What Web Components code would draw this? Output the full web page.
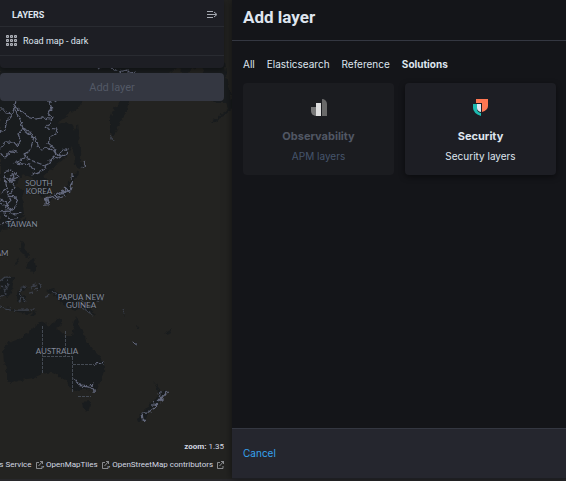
<!DOCTYPE html>
<html lang="en">
<head>
<meta charset="utf-8">
<title>Maps - Add layer</title>
<style>
html, body { height: 100%; margin: 0; }
body { background: #141519; color: #dfe5ef; font-family: Inter, "Liberation Sans", sans-serif; font-size: 10px; }
</style>
</head>
<body>
<maps-app></maps-app>
<script>
const define = (name, html, setup) => customElements.define(name, class extends HTMLElement {
  constructor() {
    super();
    this.attachShadow({ mode: 'open' }).innerHTML = '<style>*{box-sizing:border-box}button{font:inherit;border:0;background:none;padding:0;margin:0;color:inherit;cursor:pointer}</style>' + html;
  }
  connectedCallback() { if (setup) setup.call(this); }
});

define('world-map', `
<style>
:host { display: block; overflow: hidden; background: #232321; }
svg { display: block; width: 100%; height: 100%; }
.land { fill: #191c1e; }
.sea { fill: #232321; }
.line { fill: none; stroke: #63687c; stroke-width: 1.2; stroke-linejoin: bevel; }
.faint { stroke: #3c414c; }
.dash { fill: none; stroke-dasharray: 3 1; stroke: #444a53; }
text { fill: #858b9a; stroke: #191c1e; stroke-width: 1px; paint-order: stroke; font: 8px Lato, sans-serif; text-anchor: middle; }
</style>
<svg viewBox="0 0 232 481" preserveAspectRatio="xMinYMin slice" role="img" aria-label="Map of Asia and Oceania">
<filter id="rough" x="0" y="0" width="100%" height="100%" color-interpolation-filters="sRGB"><feTurbulence type="fractalNoise" baseFrequency=".25" numOctaves="2" seed="4"/><feDisplacementMap in="SourceGraphic" scale="5" xChannelSelector="R" yChannelSelector="G"/></filter>
<g filter="url(#rough)">
<g class="land">
<path d="M0 62H224L232 101V108L225 115 214 122 209 123 217 118 228 109 226 103 218 103 210 100H129L127 109 125 115 121 121 118 128 113 136 110 132 110 119 113 110 118 104 121 100H83L79 107 70 113 60 121 58 124 66 122 72 125 75 130 78 124 79 133 78 142 81 149 81 162 85 166 79 169 75 165 74 154 72 146 66 157 60 162 50 170 43 176 47 180 51 190 48 195 42 197 38 190 36 182 30 178 23 174 17 181 16 187 24 191 22 197 23 205 24 215 18 223 12 228 4 230 0 232Z"/>
<path d="M73 174 79 171 78 176 73 181 70 192 62 196 53 199 45 200 54 194 64 190 70 180Z"/>
<path d="M46 199 51 200 48 205 45 203ZM22 222 25 217 25 222 23 229ZM22 241 26 244 25 251 30 255 27 258 22 253 20 247ZM28 262 34 258 36 267 34 274 30 270 26 270ZM19 256 14 266 18 262Z"/>
<path d="M0 281 5 277 10 278 14 278 12 291 8 298 0 294ZM18 290 27 286 24 291 20 291 25 297 24 303 20 300 19 303 17 298ZM38 284 41 288 38 290ZM46 291 54 289 58 294 65 296 75 298 83 303 89 307 96 315 86 311 80 307 74 311 66 306 60 302 56 296ZM0 306 9 308 17 310 33 312 27 314 10 310ZM36 310 34 316 30 316ZM92 298 101 294 99 301 93 304Z"/>
<path d="M76 317 79 325 83 331 86 341 94 350 100 356 104 363 104 371 100 382 96 391 87 390 79 390 73 391 69 385 65 380 61 377 52 372 42 374 33 378 21 380 12 383 7 380 7 373 4 362 3 350 6 344 19 339 27 334 36 325 43 321 46 323 49 327 54 321 61 318 61 325 57 328 65 336 72 336 74 325ZM82 402 91 401 89 408 86 412 83 408Z"/>
<path d="M153 381 158 387 161 391 167 391 161 398 159 404 153 405 155 398 160 394ZM151 403 155 405 151 410 147 414 144 421 138 421 137 418 142 413 148 407ZM132 342 137 343 136 346ZM164 334 172 329 168 335ZM123 310 126 317 124 315ZM137 325 140 329 138 329Z"/>
</g>
<path class="sea" d="M179 67 183 74H169L173 70ZM190 69 201 67 205 74H188Z"/>
<g class="line">
<path d="M0 109H4L7 113 12 114 15 106 19 109 28 117 35 119 42 118 50 119M12 114 9 118 6 124 5 130 0 132M15 106 17 114 21 121 23 129 18 134 21 141 17 146 14 142 5 142 0 148M0 154 5 158 11 151 18 152M23 128 31 132 36 139 37 146 42 149 49 148 54 151 57 156M23 129 34 138 30 150 25 155 29 160 38 163 46 166M49 101 52 109 48 113 52 118 49 124 46 128 57 129 56 134 50 137 48 144 54 148 56 154 60 156 63 149 67 149 66 154 59 158 54 157 49 162 46 168 40 171 31 175M25 157 19 161 13 163M17 163 30 165 34 171M4 172 12 170 18 177 10 181 4 176 7 188 0 193M9 178 15 187 8 196 17 197M10 176 14 174 13 180 10 178M7 191 11 201 6 206 0 203M0 200 6 202 10 211 16 206 18 201 14 196M0 212 8 211 15 215 22 213M6 206 5 215 12 220 18 217M0 224 7 222 12 227M48 101 53 98M16 101 14 108M57 95 54 102M98 70 104 65 109 66M112 68 119 72 127 70 130 73 136 72"/>
<path d="M72 173V184L70 190 66 189 62 194 57 193 55 199 50 196 45 202M70 177 75 176M73 181 70 186M64 187 70 193 62 190 65 196 57 199M45 202 49 200 48 206M54 195 60 198M45 200 47 204M84 162 86 166M85 166 82 168M44 201 48 197M44 204 50 203"/>
<path d="M0 281 5 277 10 277M7 279 8 286 4 290 6 294 0 297M0 286 8 287M19 292 22 288 26 286M19 292 21 296 20 302M22 297 25 301M30 288 36 284M34 290 38 289M39 283 41 287M29 293 33 292M45 296 49 295M52 291 57 295M74 303 82 301 87 306 92 307M78 306 84 310 92 314M96 302 103 299M0 307 10 309M14 310 28 310M30 310 34 310M87 311 93 315" class="faint"/>
<path d="M73 379 78 382 81 386 90 387 93 391 96 391M92 386 93 383M94 364 101 363 104 362M132 342 137 345M152 405 157 404 155 409M153 401 156 407 147 413 142 413 143 420M158 395 162 398 167 391M161 391 160 402M157 399 164 400M158 402 163 397M141 417 145 421"/>
<path class="faint" d="M110 135 113 141M123 310 125 314"/>
</g>
</g>
<path class="dash" d="M42.500 326V374M65.500 331V356M43 356.500H73M72.500 357V393M73 364.500H94M78 396.500H91"/>
<text x="39" y="186">SOUTH</text><text x="39" y="194">KOREA</text>
<text x="22" y="227">TAIWAN</text><text x="-1" y="256">NAM</text>
<text x="81" y="300">PAPUA NEW</text><text x="81" y="308">GUINEA</text>
<text x="57" y="354">AUSTRALIA</text>
</svg>`);

define('layer-panel', `
<style>
:host { display: flex; flex-direction: column; gap: 5px; }
section { background: #1d1e24; border-radius: 0 0 4px 4px; padding-bottom: 12px; box-shadow: 0 2px 5px #0006; }
header { display: flex; align-items: center; justify-content: space-between; height: 27px; padding: 3px 6px 0 12px; border-bottom: 1px solid #292b31; }
h2 { margin: 0; font: 700 9px Roboto, sans-serif; }
header button { display: flex; }
.row { display: flex; align-items: center; gap: 6px; height: 29px; padding: 0 0 0 6px; width: 100%; border-bottom: 1px solid #292b31; font: 9px Roboto, sans-serif; color: #dfe5ef; }
.add { height: 28px; border-radius: 4px; background: #343741; color: #535966; font: 11px Roboto, sans-serif; }
</style>
<section>
<header><h2>LAYERS</h2><button aria-label="Collapse layers"><svg width="11" height="9" fill="none" stroke="#a7abb3"><path d="M0 1.500H6M0 4.500H9M0 7.500H6M7 2 10 4.500 7 7"/></svg></button></header>
<button class="row"><svg width="11" height="12" fill="#6d7179" stroke="#aeb1b8"><path d="M.5 .5h2v2h-2zM4.500 .5h2v2h-2zM8.500 .5h2v2h-2zM.5 4.500h2v2h-2zM4.500 4.500h2v2h-2zM8.500 4.500h2v2h-2zM.5 8.500h2v2h-2zM4.500 8.500h2v2h-2zM8.500 8.500h2v2h-2z"/></svg><span>Road map - dark</span></button>
</section>
<button class="add" disabled>Add layer</button>`);

define('ext-link', `
<style>
:host { display: inline-flex; align-items: center; }
a { display: inline-flex; align-items: center; gap: 4px; color: inherit; text-decoration: none; }
</style>
<a href="#"><slot></slot><svg width="7" height="8" fill="none" stroke="#a2a5aa" stroke-width=".8"><path d="M3 1.500H.5V7.500H6V5M4 .5H6.500V3M6.500.5 2.500 5"/></svg></a>`);

define('map-attribution', `
<style>
:host { display: flex; flex-direction: column; align-items: flex-end; gap: 9px; font: 8px/9px Roboto, sans-serif; color: #d4d9e2; white-space: nowrap; }
div { display: flex; align-items: center; }
.sep { margin-right: 2px; }
</style>
<div><span><b>zoom:</b> 1.35</span></div>
<div><ext-link>Elastic Maps Service</ext-link><span class="sep">,</span><ext-link>OpenMapTiles</ext-link><span class="sep">,</span><ext-link>OpenStreetMap contributors</ext-link></div>`);

define('category-tabs', `
<style>
:host { display: flex; align-items: center; gap: 12px; font-size: 10px; line-height: 14px; }
button[aria-selected=true] { font-weight: 700; }
</style>
<button role="tab">All</button><button role="tab">Elasticsearch</button><button role="tab">Reference</button><button role="tab" aria-selected="true">Solutions</button>`);

define('layer-card', `
<style>
:host { display: block; }
button { display: flex; flex-direction: column; align-items: center; width: 100%; padding: 14px 8px 12px; border-radius: 4px; background: #1d1e24; box-shadow: 0 2px 6px #0007; }
button:disabled { background: #1b1c20; color: #515764; box-shadow: none; cursor: default; }
.icon { display: flex; height: 20px; align-items: center; margin-bottom: 11px; }
strong { font-size: 11px; line-height: 16px; margin-bottom: 5px; }
.text { font-size: 10px; line-height: 14px; }
:disabled .text { color: #46556c; }
</style>
<button><span class="icon"><slot name="icon"></slot></span><strong><slot name="title"></slot></strong><span class="text"><slot></slot></span></button>`,
function () { this.shadowRoot.querySelector('button').disabled = this.hasAttribute('disabled'); });

define('add-layer-flyout', `
<style>
:host { display: flex; flex-direction: column; background: #141519; box-shadow: 0 0 8px #0008; }
header { height: 41px; padding: 7px 11px 0; border-bottom: 1px solid #343741; }
h1 { margin: 0; font: 700 17px/20px Roboto, sans-serif; }
main { flex: 1; padding: 16px 10px; }
category-tabs { padding-left: 1px; }
.cards { display: grid; grid-template-columns: 1fr 1fr; gap: 11px; margin-top: 12px; padding-left: 1px; }
footer { display: flex; align-items: center; height: 51px; padding: 0 11px 1px; background: #25262e; border-top: 1px solid #343741; border-bottom: 1px solid #1d1e22; }
footer button { color: #36a2ef; font-size: 10px; }
svg { display: block; }
</style>
<header><h1>Add layer</h1></header>
<main>
<category-tabs role="tablist"></category-tabs>
<div class="cards">
<layer-card disabled><svg slot="icon" width="16" height="17"><path fill="#777" d="M0 8H5V17A5 5 0 0 1 0 12Z"/><path fill="#ddd" d="M5 4H10V17H5Z"/><path fill="#696969" d="M11 0A5 5 0 0 1 16 5V17H11Z"/></svg><span slot="title">Observability</span>APM layers</layer-card>
<layer-card><svg slot="icon" width="15" height="17"><path fill="#ff7752" d="M3 0H15V7Q15 11 9 13V4H3Z"/><path fill="#1dbab0" d="M0 5H4V10Q4 13 8 14V17Q0 14 0 9Z"/><path fill="#dde6f1" d="M4 5H8V13Q4 12 4 9Z"/></svg><span slot="title">Security</span>Security layers</layer-card>
</div>
</main>
<footer><button>Cancel</button></footer>`);

define('maps-app', `
<style>
:host { display: grid; grid-template-columns: 41fr 59fr; height: 100%; padding-bottom: 2px; background: #28282b; box-sizing: border-box; }
.view { display: grid; grid-template-rows: minmax(0, 1fr); grid-template-columns: minmax(0, 1fr); min-width: 0; overflow: hidden; }
world-map, .overlay { grid-area: 1 / 1; min-width: 0; min-height: 0; }
.overlay { display: flex; flex-direction: column; justify-content: space-between; padding: 0 8px 10px 0; z-index: 1; }
</style>
<div class="view"><world-map></world-map><div class="overlay"><layer-panel></layer-panel><map-attribution></map-attribution></div></div>
<add-layer-flyout></add-layer-flyout>`);
</script>
</body>
</html>
